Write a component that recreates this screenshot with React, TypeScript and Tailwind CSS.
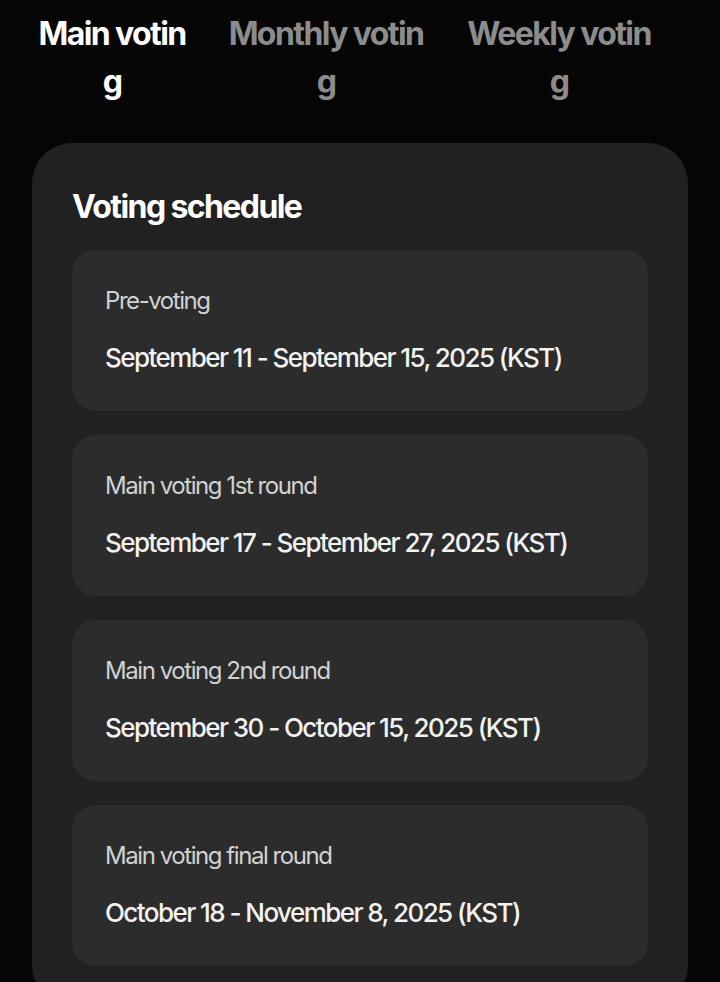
const tabs = [
  { label: 'Main voting', active: true, width: 'w-[152px]' },
  { label: 'Monthly voting', active: false, width: 'w-[200px]' },
  { label: 'Weekly voting', active: false, width: 'w-[190px]' },
];

const schedule = [
  { title: 'Pre-voting', dates: 'September 11 - September 15, 2025 (KST)' },
  { title: 'Main voting 1st round', dates: 'September 17 - September 27, 2025 (KST)' },
  { title: 'Main voting 2nd round', dates: 'September 30 - October 15, 2025 (KST)' },
  { title: 'Main voting final round', dates: 'October 18 - November 8, 2025 (KST)' },
];

export default function App() {
  return (
    <div
      className="min-h-[982px] bg-[#050505] overflow-hidden"
      style={{ fontFamily: 'Inter, "Noto Sans", sans-serif' }}
    >
      {/* Tabs */}
      <nav className="flex gap-[38px] pl-[36px] pt-[10px]">
        {tabs.map((t) => (
          <button
            key={t.label}
            className={`${t.width} text-center break-all text-[32px] leading-[48px] font-bold tracking-[-0.05em] ${
              t.active ? 'text-white' : 'text-[#8c8c8c]'
            }`}
          >
            {t.label}
          </button>
        ))}
      </nav>

      {/* Schedule panel */}
      <section className="mx-[32px] mt-[37px] rounded-[40px] bg-[#212121] px-[40px] pt-[40px] pb-[40px]">
        <h2 className="text-[32px] leading-[48px] font-bold tracking-[-0.05em] text-white">
          Voting schedule
        </h2>
        <div className="mt-[19px] flex flex-col gap-[24px]">
          {schedule.map((s) => (
            <div key={s.title} className="rounded-[24px] bg-[#2c2c2c] px-[33px] py-[33px]">
              <p className="text-[24px] leading-[36px] tracking-[-0.06em] text-[#d2d2d2]">{s.title}</p>
              <p className="mt-[19px] text-[26px] leading-[40px] font-medium tracking-[-0.06em] text-[#f2f2f2]">
                {s.dates}
              </p>
            </div>
          ))}
        </div>
      </section>
    </div>
  );
}
